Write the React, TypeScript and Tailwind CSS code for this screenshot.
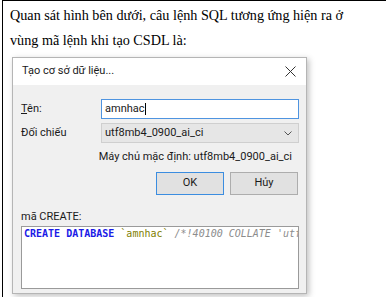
const App = () => {
  return (
    <div className="w-[386px] h-[297px] bg-white overflow-hidden">
      <div className="ml-[2px] h-full border-l border-t border-black pl-[7px]">
        <p
          className="pt-[2px] text-[14.2px] leading-[25px] text-black"
          style={{ fontFamily: '"Liberation Serif", "Times New Roman", serif' }}
        >
          Quan sát hình bên dưới, câu lệnh SQL tương ứng hiện ra ở
          <br />
          vùng mã lệnh khi tạo CSDL là:
        </p>

        {/* Dialog */}
        <div
          className="mt-[4px] ml-[2px] w-[295px] h-[237px] border border-[#b5b5b5] bg-[#f0f0f0] shadow-[2px_2px_6px_rgba(0,0,0,0.25)] text-[11px] text-[#1a1a1a] flex flex-col"
          style={{ fontFamily: 'Roboto, "Noto Sans", sans-serif' }}
        >
          <div className="h-[27px] bg-white flex items-center justify-between pl-[9px] pr-[10px]">
            <span>Tạo cơ sở dữ liệu...</span>
            <svg width="11" height="11" viewBox="0 0 11 11" className="text-[#333]">
              <path d="M0.5 0.5 L10.5 10.5 M10.5 0.5 L0.5 10.5" stroke="currentColor" strokeWidth="1" />
            </svg>
          </div>

          <div className="flex flex-col pl-[8px] pr-[7px] pt-[14px]">
            <div className="flex items-center h-[20px]">
              <span className="w-[80px]">
                <span className="underline">T</span>ên:
              </span>
              <div className="flex-1 h-[20px] bg-white border border-[#4f94e0] flex items-center px-[3px]">
                amnhac<span className="w-px h-[12px] bg-black" />
              </div>
            </div>

            <div className="flex items-center h-[20px] mt-[4px]">
              <span className="w-[80px]">Đối chiếu</span>
              <div className="flex-1 h-[20px] bg-[#e6e6e6] border border-[#cfcfcf] flex items-center justify-between px-[3px]">
                <span>utf8mb4_0900_ai_ci</span>
                <svg width="8" height="5" viewBox="0 0 8 5" className="mr-[3px]">
                  <path d="M0.5 0.5 L4 4 L7.5 0.5" stroke="#555" fill="none" strokeWidth="1" />
                </svg>
              </div>
            </div>

            <div className="mt-[4px] h-[20px] flex items-center justify-end pr-[7px]">
              Máy chủ mặc định: utf8mb4_0900_ai_ci
            </div>

            <div className="mt-[5px] flex justify-end gap-[6px] pr-[1px]">
              <button className="w-[68px] h-[23px] bg-[#e1e1e1] border border-[#3b8de0]">OK</button>
              <button className="w-[68px] h-[23px] bg-[#e1e1e1] border border-[#adadad]">Hủy</button>
            </div>

            <div className="mt-[14px] h-[16px] flex items-center">mã CREATE:</div>

            <div
              className="mt-[1px] h-[63px] bg-white border border-[#9a9a9a] px-[2px] pt-0 text-[10px] leading-[13px] whitespace-nowrap overflow-hidden"
              style={{ fontFamily: '"DejaVu Sans Mono", "Liberation Mono", monospace' }}
            >
              <span className="text-[#1a1ae6] font-bold">CREATE DATABASE</span>{" "}
              <span className="text-[#808000]">`amnhac`</span>{" "}
              <span className="text-[#8c8c8c] italic">/*!40100 COLLATE 'utf8mb4_0900_ai_ci' */</span>
            </div>
          </div>
        </div>
      </div>
    </div>
  );
};

export default App;
